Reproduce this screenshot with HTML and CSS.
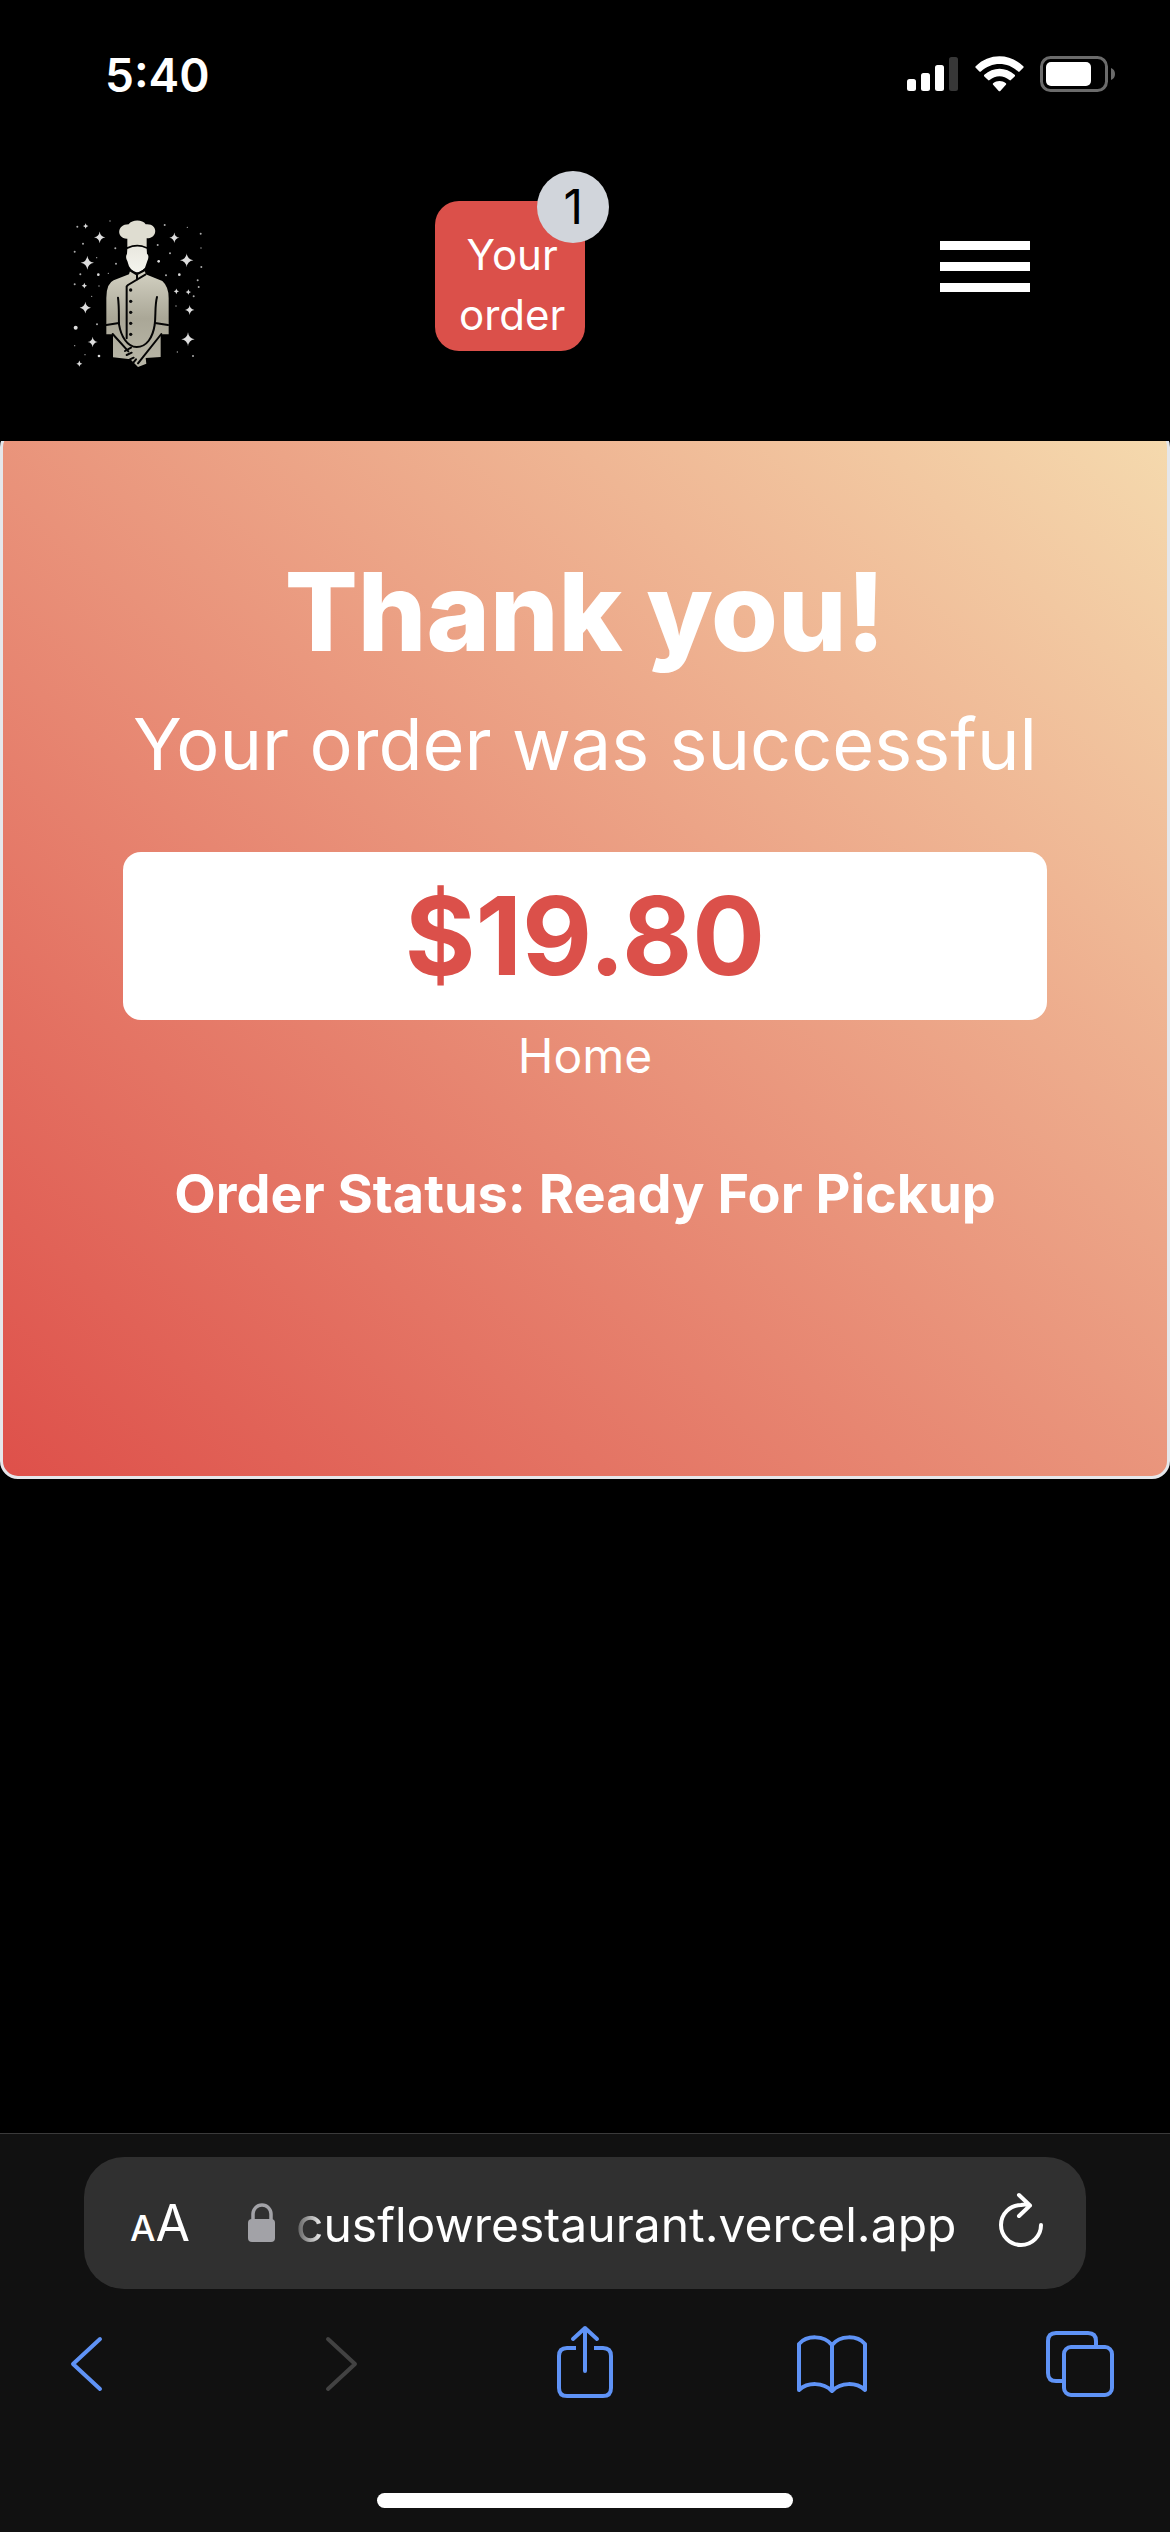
FILE: index.html
```html
<!DOCTYPE html>
<html lang="en">
<head>
<meta charset="utf-8">
<meta name="viewport" content="width=device-width, initial-scale=1">
<title>Order confirmation</title>
<link rel="stylesheet" href="styles.css">
</head>
<body>
<div class="screen">
  <div class="status-bar">
    <time class="clock">5:40</time>
    <div class="indicators">
      <svg width="52" height="36" viewBox="0 0 52 36" fill="#fff" aria-hidden="true">
        <rect x="0" y="23" width="9" height="12" rx="2.5"/><rect x="14" y="17" width="9" height="18" rx="2.5"/><rect x="28" y="9" width="9" height="26" rx="2.5"/><rect x="42" y="1" width="9" height="34" rx="2.5" fill="#373737"/>
      </svg>
      <svg width="49" height="36" viewBox="0 0 49 36" fill="#fff" aria-hidden="true">
        <path d="M.7 10.3C14-3 35-3 48.300 10.300Q49 11 48.300 11.800L44.600 15.500Q43.900 16.200 43.100 15.500C32.500 5.500 16.500 5.500 5.900 15.500Q5.100 16.200 4.400 15.500L.7 11.800Q0 11 .7 10.300Z"/>
        <path d="M9.300 18.800C18 10.700 31 10.700 39.700 18.800Q40.500 19.600 39.700 20.400L35.900 24.100Q35.200 24.800 34.400 24.100C28.600 19 20.400 19 14.600 24.100Q13.800 24.800 13.100 24.100L9.300 20.400Q8.500 19.600 9.300 18.800Z"/>
        <path d="M18.100 27.200C21.800 24.300 27.200 24.300 30.900 27.200Q31.700 28 30.900 28.800L25.300 34.900Q24.500 35.700 23.700 34.900L18.100 28.800Q17.300 28 18.100 27.200Z"/>
      </svg>
      <svg width="76" height="36" viewBox="0 0 76 36" aria-hidden="true">
        <rect x="1.500" y="1.500" width="65" height="33" rx="9" fill="none" stroke="#6b6b6b" stroke-width="3"/>
        <rect x="6" y="6" width="45" height="24" rx="5" fill="#fff"/>
        <path d="M71 12Q75 13.500 75 18T71 24Z" fill="#6b6b6b"/>
      </svg>
    </div>
  </div>

  <header class="site-header">
    <a class="logo" href="#" aria-label="Restaurant home">
      <svg width="180" height="180" viewBox="0 0 540 540" aria-hidden="true">
        <defs>
          <linearGradient id="coat" x1="0" y1="0" x2="0" y2="1"><stop offset="0" stop-color="#d4d2c3"/><stop offset=".5" stop-color="#aaa797"/><stop offset="1" stop-color="#b9b7a8"/></linearGradient>
          <linearGradient id="skin" x1="0" y1="0" x2="0" y2="1"><stop offset="0" stop-color="#e9e8df"/><stop offset="1" stop-color="#f4f4ee"/></linearGradient>
          <path id="star" d="M0-21Q2-3 20 0Q2 3 0 21Q-2 3-20 0Q-2-3 0-21Z"/>
        </defs>
        <path d="M232 138V113C199 114 199 70 236 70C246 55 278 55 287 70C325 66 325 113 290 112V138Q262 125 232 138Z" fill="#dfddd1"/>
        <path d="M232 144Q262 130 290 143L291 158Q299 164 292 180L285 200Q272 214 260 214Q246 211 237 196L232 180Q225 169 231 158Z" fill="url(#skin)"/>
        <path d="M241 207L260 220L284 207L287 220L337 240Q356 257 356 291V400H332V468L287 471L289 488L264 498L241 475L189 469V400H169V291Q169 247 191 238L237 220Z" fill="url(#coat)"/>
        <g fill="none" stroke="#050505" stroke-width="6" stroke-linecap="round" stroke-linejoin="round">
          <path d="M240 208L260 220L285 207M286 221L234 252L230 256V412M261 219V236"/>
          <path d="M204 290C208 320 206 350 207 370C213 405 231 438 260 438C290 438 308 410 314 372C318 340 314 315 321 288"/>
          <path d="M169 372L207 366M315 366L354 372M188 399L235 451M334 399L264 487M225 450L243 440M230 462L245 455M240 475L251 470M250 485L258 475"/>
        </g>
        <g fill="#090909"><circle cx="242" cy="267" r="5"/><circle cx="242" cy="301" r="5"/><circle cx="242" cy="334" r="5"/><circle cx="242" cy="367" r="5"/><circle cx="242" cy="400" r="5"/></g>
        <g fill="#ddd">
          <use href="#star" x="112" y="185"/><use href="#star" x="410" y="178"/><use href="#star" x="414" y="415"/>
          <use href="#star" transform="translate(149 109) scale(.85)"/><use href="#star" transform="translate(373 110) scale(.75)"/><use href="#star" transform="translate(106 320) scale(.85)"/><use href="#star" transform="translate(419 327) scale(.7)"/><use href="#star" transform="translate(128 423) scale(.75)"/><use href="#star" transform="translate(88 488) scale(.45)"/><use href="#star" transform="translate(107 75) scale(.4)"/><use href="#star" transform="translate(103 254) scale(.4)"/><use href="#star" transform="translate(415 273) scale(.4)"/><use href="#star" transform="translate(379 271) scale(.4)"/>
          <circle cx="77" cy="380" r="6"/><circle cx="145" cy="221" r="4"/><circle cx="326" cy="181" r="4"/><circle cx="388" cy="221" r="4"/><circle cx="147" cy="465" r="4"/>
        </g>
        <g fill="#aaa">
          <circle cx="82" cy="77" r="3"/><circle cx="99" cy="128" r="3"/><circle cx="74" cy="152" r="3"/><circle cx="180" cy="60" r="2"/><circle cx="196" cy="142" r="3"/><circle cx="198" cy="188" r="3"/><circle cx="175" cy="217" r="2"/><circle cx="91" cy="220" r="3"/><circle cx="74" cy="250" r="3"/><circle cx="147" cy="255" r="2"/><circle cx="140" cy="170" r="2"/><circle cx="125" cy="286" r="2"/><circle cx="141" cy="370" r="3"/><circle cx="74" cy="434" r="2"/><circle cx="105" cy="461" r="2"/><circle cx="323" cy="132" r="3"/><circle cx="344" cy="72" r="3"/><circle cx="412" cy="79" r="2"/><circle cx="452" cy="98" r="3"/><circle cx="360" cy="157" r="3"/><circle cx="453" cy="141" r="2"/><circle cx="348" cy="223" r="3"/><circle cx="454" cy="198" r="3"/><circle cx="443" cy="238" r="3"/><circle cx="446" cy="258" r="3"/><circle cx="431" cy="286" r="3"/><circle cx="378" cy="315" r="2"/><circle cx="429" cy="465" r="3"/><circle cx="382" cy="453" r="2"/>
        </g>
      </svg>
    </a>
    <button class="order-button" type="button">Your<br>order<span class="badge">1</span></button>
    <button class="menu-button" type="button" aria-label="Open menu"><span></span><span></span><span></span></button>
  </header>

  <main class="card">
    <h1 class="title">Thank you!</h1>
    <p class="subtitle">Your order was successful</p>
    <p class="price">$19.80</p>
    <a class="home-link" href="#">Home</a>
    <h2 class="order-status">Order Status: Ready For Pickup</h2>
  </main>

  <footer class="browser">
    <div class="address-bar">
      <button class="text-size" type="button" aria-label="Page settings"><span class="small-a">A</span><span>A</span></button>
      <svg class="lock" width="28" height="40" viewBox="0 0 28 40" aria-hidden="true"><path d="M5 18V11a9 9 0 0 1 18 0V18" fill="none" stroke="#a2a2a7" stroke-width="3.500"/><rect x="0" y="16" width="27" height="23" rx="4" fill="#a2a2a7"/></svg>
      <input class="url" type="text" aria-label="Address" value="cusflowrestaurant.vercel.app" readonly>
      <button class="reload" type="button" aria-label="Reload">
        <svg width="46" height="56" viewBox="0 0 46 56" fill="none" stroke="#fff" stroke-width="4" stroke-linecap="round" stroke-linejoin="round"><path d="M43 33A20 20 0 1 1 23 13Q28 12 32 13.500M21 3L32 13.500L21 24"/></svg>
      </button>
    </div>
    <nav class="toolbar" aria-label="Browser">
      <button type="button" aria-label="Back"><svg viewBox="0 0 72 84"><path d="M50 17L23 42L50 67"/></svg></button>
      <button type="button" aria-label="Forward" disabled><svg viewBox="0 0 72 84"><path d="M29 17L56 42L29 67"/></svg></button>
      <button type="button" aria-label="Share"><svg viewBox="0 0 72 84"><path d="M29 26H20Q12 26 12 34V66Q12 74 20 74H56Q64 74 64 66V34Q64 26 56 26H47" stroke-linecap="butt"/><path d="M38 49V6M26 17L38 6L50 17"/></svg></button>
      <button type="button" aria-label="Bookmarks"><svg viewBox="0 0 72 84"><path d="M36 23V69M36 23C28 13 11 13 3 22V68C12 60 27 60 36 69C45 60 60 60 69 68V22C61 13 44 13 36 23Z"/></svg></button>
      <button type="button" aria-label="Tabs"><svg viewBox="0 0 72 84"><rect x="20" y="25" width="48" height="48" rx="7"/><path d="M19 59H12Q4 59 4 51V19Q4 11 12 11H44Q52 11 52 19V24" stroke-linecap="butt"/></svg></button>
    </nav>
    <div class="home-indicator"></div>
  </footer>
</div>
</body>
</html>
```
FILE: styles.css
```css
* {
  box-sizing: border-box;
}

body {
  margin: 0;
  background: #000;
  color: #fff;
  font-family: Inter, "Liberation Sans", sans-serif;
}

h1,
h2,
p {
  margin: 0;
}

button {
  padding: 0;
  border: 0;
  background: none;
  color: inherit;
  font: inherit;
}

svg {
  display: block;
}

a {
  color: inherit;
  text-decoration: none;
}

.screen {
  display: flex;
  flex-direction: column;
  min-height: 100vh;
}

/* Phone status bar */
.status-bar {
  display: flex;
  justify-content: space-between;
  align-items: flex-start;
  height: 141px;
  padding: 45px 54px 0 105px;
}

.clock {
  font-size: 46px;
  line-height: 60px;
  font-weight: 600;
}

.indicators {
  display: flex;
  gap: 16px;
  padding-top: 11px;
}

/* Site header */
.site-header {
  position: relative;
  z-index: 1;
  display: flex;
  align-items: flex-start;
  padding: 60px 140px 60px 50px;
  background: #000;
}

.order-button {
  position: relative;
  margin-left: 205px;
  padding: 24px 20px 6px 24px;
  border-radius: 24px;
  background: #db504a;
  font-size: 42px;
  line-height: 60px;
}

.badge {
  position: absolute;
  top: -30px;
  right: -24px;
  width: 72px;
  height: 72px;
  border-radius: 50%;
  background: #d1d5db;
  color: #000;
  font-size: 48px;
  line-height: 72px;
  text-align: center;
}

.menu-button {
  display: grid;
  gap: 12px;
  width: 90px;
  margin: 40px 0 0 auto;
}

.menu-button span {
  height: 9px;
  background: #fff;
}

/* Confirmation card */
.card {
  display: flex;
  flex-direction: column;
  margin-top: -12px;
  padding: 120px 120px 240px;
  border: 3px solid #e5e7eb;
  border-radius: 18px;
  background: linear-gradient(to top right, #de504a, #f5daae);
  text-align: center;
}

.title {
  font-size: 108px;
  line-height: 120px;
  font-weight: 800;
}

.subtitle {
  margin: 24px -60px 60px;
  font-size: 72px;
  line-height: 96px;
  font-weight: 400;
}

.price {
  padding: 24px;
  border-radius: 18px;
  background: #fff;
  color: #db504a;
  font-size: 108px;
  line-height: 120px;
  font-weight: 700;
}

.home-link {
  font-size: 48px;
  line-height: 72px;
}

.order-status {
  margin-top: 60px;
  font-size: 54px;
  line-height: 84px;
  font-weight: 700;
}

/* Browser controls */
.browser {
  margin-top: auto;
  padding: 23px 0 24px;
  border-top: 1px solid #3a3a3a;
  background: #111;
}

.address-bar {
  display: flex;
  align-items: center;
  height: 132px;
  margin: 0 84px;
  padding: 4px 42px 0 46px;
  border-radius: 40px;
  background: #303030;
}

.text-size {
  font-size: 50px;
  line-height: 60px;
}

.small-a {
  font-size: 36px;
  font-weight: 500;
}

.lock {
  margin: 0 20px 4px 58px;
}

.url {
  flex: 1;
  min-width: 0;
  padding: 0;
  border: 0;
  outline: 0;
  background: none;
  color: #fff;
  font: 400 48px/60px Inter, "Liberation Sans", sans-serif;
  mask-image: linear-gradient(to right, rgb(0 0 0 / 0.2), #000 28px);
}

.reload {
  margin: 0 0 10px 36px;
}

.toolbar {
  display: flex;
  justify-content: space-between;
  padding: 33px 54px 0 50px;
}

.toolbar svg {
  width: 72px;
  height: 84px;
  fill: none;
  stroke: #5f93f6;
  stroke-width: 4;
  stroke-linecap: round;
  stroke-linejoin: round;
}

.toolbar button:disabled svg {
  stroke: #424242;
}

.home-indicator {
  width: 416px;
  height: 15px;
  margin: 87px auto 0;
  border-radius: 8px;
  background: #fff;
}
```
